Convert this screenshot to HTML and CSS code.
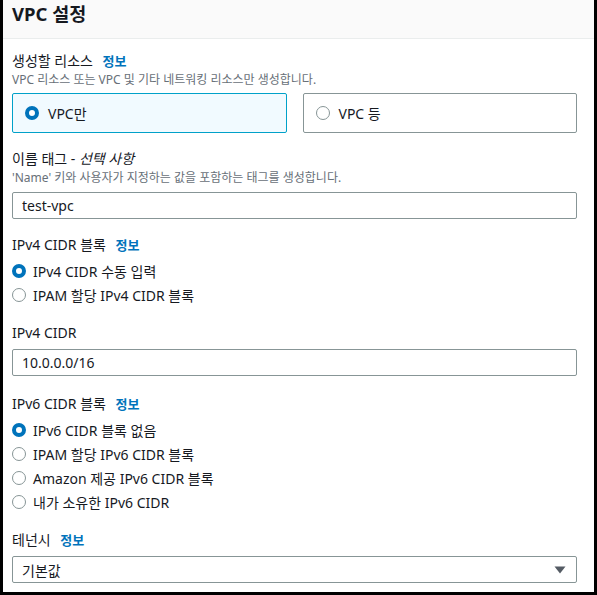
FILE: index.html
```html
<!DOCTYPE html>
<html lang="ko">
<head>
<meta charset="utf-8">
<title>VPC 설정</title>
<link rel="stylesheet" href="styles.css">
</head>
<body>
<div class="frame">
  <div class="panel">
    <div class="panel-header">
      <h2 class="title">VPC 설정</h2>
    </div>
    <div class="panel-body">
      <div class="field">
        <div class="label">생성할 리소스 <a class="info">정보</a></div>
        <div class="desc">VPC 리소스 또는 VPC 및 기타 네트워킹 리소스만 생성합니다.</div>
        <div class="tiles">
          <div class="tile selected"><span class="radio on"></span><span>VPC만</span></div>
          <div class="tile"><span class="radio"></span><span>VPC 등</span></div>
        </div>
      </div>

      <div class="field">
        <div class="label">이름 태그 - <i>선택 사항</i></div>
        <div class="desc">'Name' 키와 사용자가 지정하는 값을 포함하는 태그를 생성합니다.</div>
        <div class="input after-desc">test-vpc</div>
      </div>

      <div class="field">
        <div class="label">IPv4 CIDR 블록 <a class="info">정보</a></div>
        <div class="radios">
          <div class="opt"><span class="radio on"></span><span>IPv4 CIDR 수동 입력</span></div>
          <div class="opt"><span class="radio"></span><span>IPAM 할당 IPv4 CIDR 블록</span></div>
        </div>
      </div>

      <div class="field spaced">
        <div class="label">IPv4 CIDR</div>
        <div class="input">10.0.0.0/16</div>
      </div>

      <div class="field">
        <div class="label">IPv6 CIDR 블록 <a class="info">정보</a></div>
        <div class="radios">
          <div class="opt"><span class="radio on"></span><span>IPv6 CIDR 블록 없음</span></div>
          <div class="opt"><span class="radio"></span><span>IPAM 할당 IPv6 CIDR 블록</span></div>
          <div class="opt"><span class="radio"></span><span>Amazon 제공 IPv6 CIDR 블록</span></div>
          <div class="opt"><span class="radio"></span><span>내가 소유한 IPv6 CIDR</span></div>
        </div>
      </div>

      <div class="field">
        <div class="label">테넌시 <a class="info">정보</a></div>
        <div class="input select"><span>기본값</span>
          <svg class="caret" width="12" height="8" viewBox="0 0 12 8"><path d="M0.5 0.5 H11.5 L6 7.5 Z" fill="#545b64"/></svg>
        </div>
      </div>
    </div>
  </div>
</div>
</body>
</html>
```

FILE: styles.css
```css
html, body {
  margin: 0;
  padding: 0;
  background: #000;
}
body {
  width: 597px;
  height: 595px;
  overflow: hidden;
  font-family: "Noto Sans", "Noto Sans CJK KR", sans-serif;
  color: #16191f;
  font-size: 14px;
}
.frame {
  margin: 0 3px;
  height: 592px;
  background: #fff;
  overflow: hidden;
}
.panel-header {
  background: #fafafa;
  border-bottom: 1px solid #eaeded;
  padding: 3px 9px 13px;
}
.title {
  margin: 0;
  font-size: 18.5px;
  line-height: 22px;
  font-weight: 700;
  color: #16191f;
}
.panel-body {
  padding: 12px 17px 0 9px;
  display: flex;
  flex-direction: column;
  gap: 16px;
}
.field {
  display: flex;
  flex-direction: column;
}
.field.spaced {
  margin-bottom: 2px;
}
.label {
  font-size: 14px;
  line-height: 20px;
  color: #16191f;
}
.label i {
  font-style: italic;
}
.info {
  color: #0073bb;
  font-weight: 700;
  font-size: 13px;
  margin-left: 6px;
}
.desc {
  font-size: 12px;
  line-height: 18px;
  color: #687078;
}
.tiles {
  display: grid;
  grid-template-columns: 1fr 1fr;
  gap: 16px;
  margin-top: 4px;
}
.tile {
  height: 40px;
  box-sizing: border-box;
  border: 1px solid #879596;
  border-radius: 2px;
  display: flex;
  align-items: center;
  gap: 9px;
  padding-left: 12px;
  font-size: 14px;
}
.tile.selected {
  border-color: #00a1c9;
  background: #f1faff;
}
.radio {
  width: 14px;
  height: 14px;
  box-sizing: border-box;
  border-radius: 50%;
  border: 1.5px solid #879596;
  background: #fff;
  flex: none;
}
.radio.on {
  border: 4px solid #0073bb;
}
.radios {
  display: flex;
  flex-direction: column;
  margin-top: 4px;
}
.opt {
  height: 24px;
  display: flex;
  align-items: center;
  gap: 7px;
}
.input {
  margin-top: 6px;
  height: 27px;
  box-sizing: border-box;
  border: 1px solid #879596;
  border-radius: 2px;
  padding: 0 9px;
  display: flex;
  align-items: center;
  font-size: 14px;
}
.input.after-desc {
  margin-top: 5px;
}
.select {
  justify-content: space-between;
}
.caret {
  margin-right: 1px;
}
```
